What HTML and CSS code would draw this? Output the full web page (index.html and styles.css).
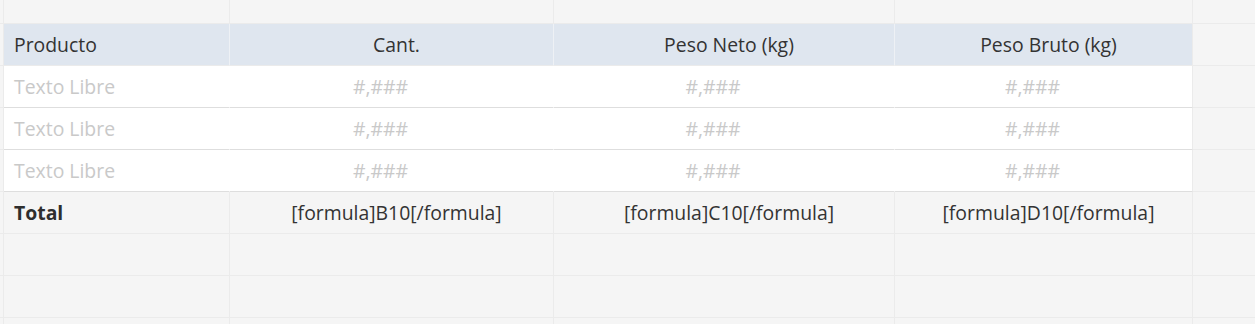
FILE: index.html
```html
<!DOCTYPE html>
<html lang="es">
<head>
<meta charset="utf-8">
<title>Tabla</title>
<link rel="stylesheet" href="styles.css">
</head>
<body>
<div class="sheet">
  <div class="row row-top">
    <div class="cell edge"></div>
    <div class="cell"></div>
    <div class="cell"></div>
    <div class="cell"></div>
    <div class="cell"></div>
    <div class="cell last"></div>
  </div>
  <div class="row row-head">
    <div class="cell edge"></div>
    <div class="cell head left">Producto</div>
    <div class="cell head">Cant.</div>
    <div class="cell head">Peso Neto (kg)</div>
    <div class="cell head end">Peso Bruto (kg)</div>
    <div class="cell last"></div>
  </div>
  <div class="row">
    <div class="cell edge"></div>
    <div class="cell body left"><span class="ph">Texto Libre</span></div>
    <div class="cell body"><span class="ph num">#,###</span></div>
    <div class="cell body"><span class="ph num">#,###</span></div>
    <div class="cell body end"><span class="ph num">#,###</span></div>
    <div class="cell last"></div>
  </div>
  <div class="row">
    <div class="cell edge"></div>
    <div class="cell body left"><span class="ph">Texto Libre</span></div>
    <div class="cell body"><span class="ph num">#,###</span></div>
    <div class="cell body"><span class="ph num">#,###</span></div>
    <div class="cell body end"><span class="ph num">#,###</span></div>
    <div class="cell last"></div>
  </div>
  <div class="row">
    <div class="cell edge"></div>
    <div class="cell body left"><span class="ph">Texto Libre</span></div>
    <div class="cell body"><span class="ph num">#,###</span></div>
    <div class="cell body"><span class="ph num">#,###</span></div>
    <div class="cell body end"><span class="ph num">#,###</span></div>
    <div class="cell last"></div>
  </div>
  <div class="row">
    <div class="cell edge"></div>
    <div class="cell total left">Total</div>
    <div class="cell formula">[formula]B10[/formula]</div>
    <div class="cell formula">[formula]C10[/formula]</div>
    <div class="cell formula">[formula]D10[/formula]</div>
    <div class="cell last"></div>
  </div>
  <div class="row">
    <div class="cell edge"></div>
    <div class="cell"></div>
    <div class="cell"></div>
    <div class="cell"></div>
    <div class="cell"></div>
    <div class="cell last"></div>
  </div>
  <div class="row">
    <div class="cell edge"></div>
    <div class="cell"></div>
    <div class="cell"></div>
    <div class="cell"></div>
    <div class="cell"></div>
    <div class="cell last"></div>
  </div>
  <div class="row">
    <div class="cell edge"></div>
    <div class="cell"></div>
    <div class="cell"></div>
    <div class="cell"></div>
    <div class="cell"></div>
    <div class="cell last"></div>
  </div>
</div>
</body>
</html>
```
FILE: styles.css
```css
html, body {
  margin: 0;
  padding: 0;
  background: #f5f5f5;
  overflow: hidden;
}

.sheet {
  display: flex;
  flex-direction: column;
  width: 1255px;
  height: 324px;
  overflow: hidden;
  font-family: "Open Sans", "Liberation Sans", sans-serif;
  font-size: 19.4px;
  color: #333333;
}

.row {
  display: grid;
  grid-template-columns: 4px 226px 324px 341px 298px 1fr;
  height: 42px;
  flex: none;
}

.row-top {
  height: 24px;
}

.cell {
  box-sizing: border-box;
  background: #f5f5f5;
  border-right: 1px solid #ebebeb;
  border-bottom: 1px solid #ebebeb;
  display: flex;
  align-items: center;
  justify-content: center;
  padding-left: 10px;
  white-space: nowrap;
  overflow: hidden;
}

.cell.edge {
  padding: 0;
}

.cell.last {
  border-right: none;
  padding: 0;
}

.cell.left {
  justify-content: flex-start;
}

.head {
  background: #dfe6ef;
  border-right-color: #eef1f5;
  color: #333333;
}

.head.end {
  border-right-color: #ebebeb;
}

.body {
  background: #ffffff;
  border-right-color: #ffffff;
  border-bottom-color: #dedede;
}

.body.end {
  border-right-color: #ebebeb;
}

.ph {
  color: #c9c9c9;
}

.ph.num {
  margin-right: 32px;
}

.total {
  font-weight: 700;
  color: #2e2e2e;
}

.formula {
  color: #333333;
}
```
